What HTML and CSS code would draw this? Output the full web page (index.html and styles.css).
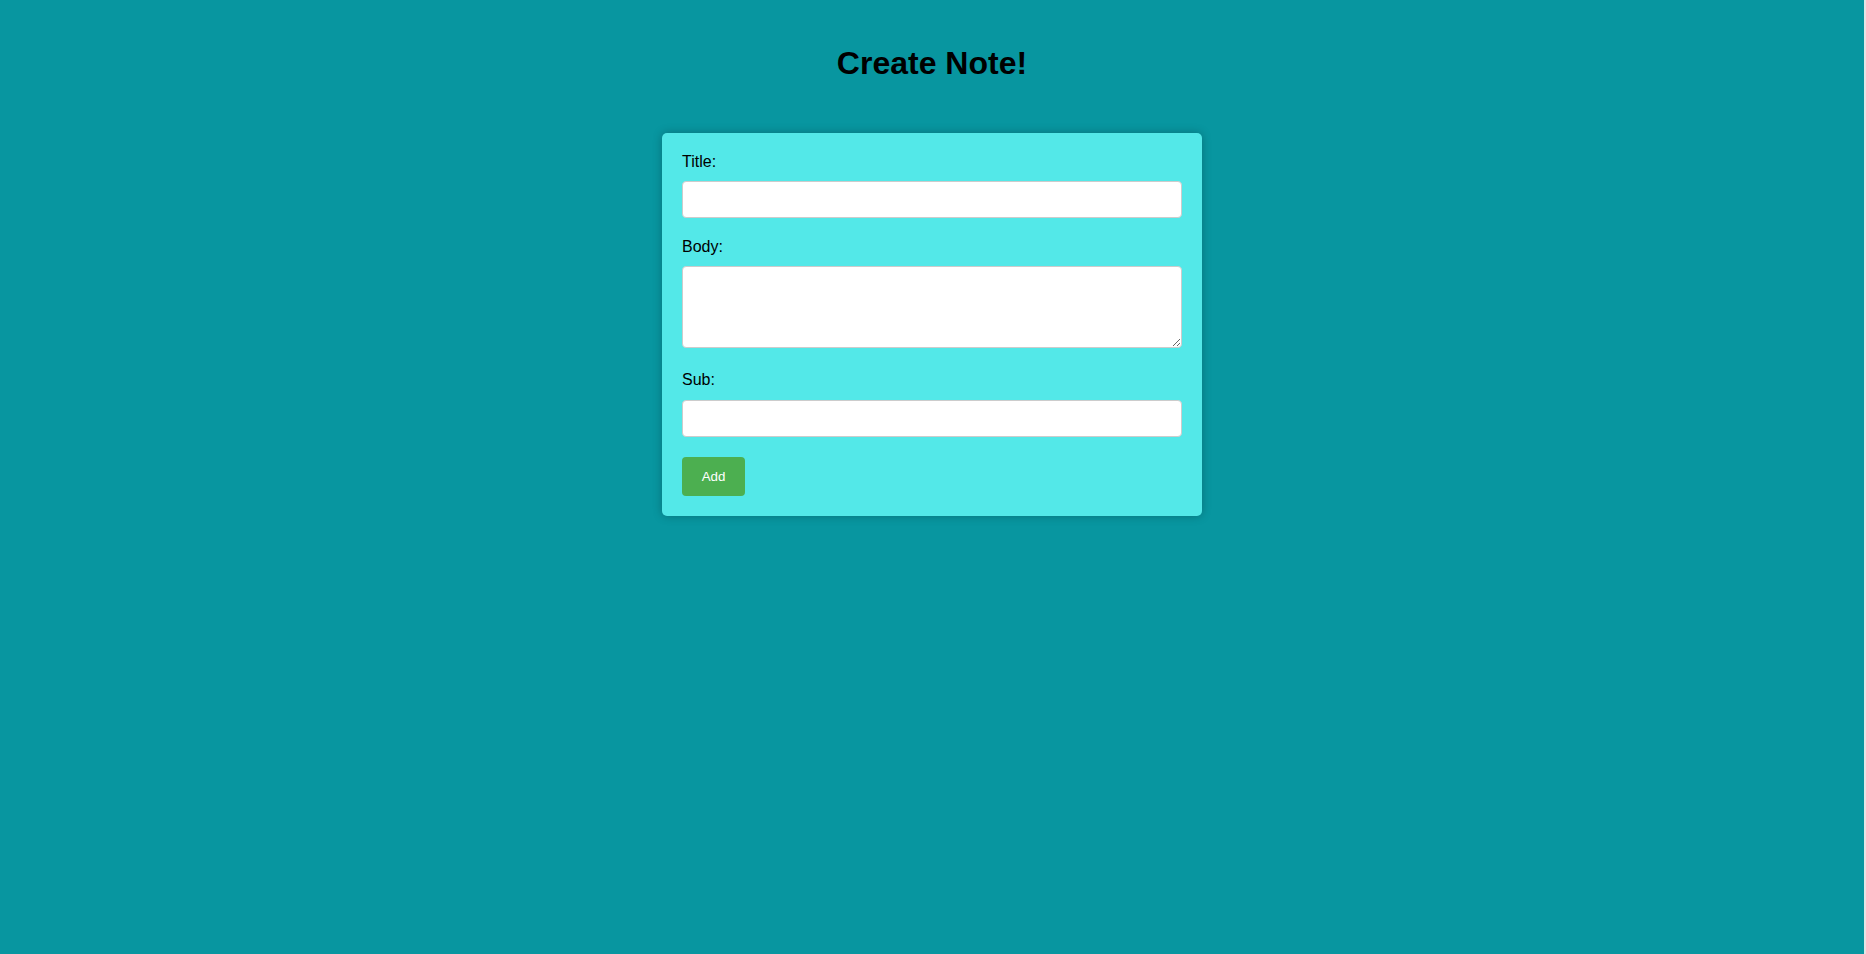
FILE: index.html
```html
<!DOCTYPE html>
<html lang="en">
<head>
<meta charset="utf-8">
<title>Create Note!</title>
<link rel="stylesheet" href="styles.css">
</head>
<body>
<div class="page">
  <h1 class="heading">Create Note!</h1>
  <form class="card">
    <label class="label label-first" for="title">Title:</label>
    <input class="field" id="title" type="text">
    <label class="label label-body" for="body">Body:</label>
    <textarea class="field area" id="body"></textarea>
    <label class="label label-sub" for="sub">Sub:</label>
    <input class="field" id="sub" type="text">
    <div class="actions">
      <button class="btn" type="button">Add</button>
    </div>
  </form>
</div>
</body>
</html>
```
FILE: styles.css
```css
html {
  background: #e4e4e4;
}
body {
  margin: 0 2px 0 0;
  font-family: "Liberation Sans", Arial, sans-serif;
}
.page {
  min-height: 954px;
  background: #0896a0;
  display: flex;
  flex-direction: column;
  align-items: center;
}
.heading {
  margin: 45px 0 51px;
  font-size: 32px;
  line-height: 37px;
  font-weight: bold;
  color: #000;
}
.card {
  width: 500px;
  padding: 20px;
  background: #53e8e8;
  border-radius: 5px;
  box-shadow: 0 0 10px rgba(0, 0, 0, 0.25);
  display: flex;
  flex-direction: column;
}
.label {
  display: block;
  font-size: 16px;
  line-height: 18px;
  color: #000;
  margin: 19px 0 10px;
}
.label-first {
  margin-top: 0;
}
.label-body {
  margin-top: 20px;
  margin-bottom: 10px;
}
.label-sub {
  margin-top: 23px;
  margin-bottom: 11px;
}
.field {
  display: block;
  box-sizing: border-box;
  width: 500px;
  height: 37px;
  margin: 0;
  padding: 8px;
  border: 1px solid #cccccc;
  border-radius: 4px;
  background: #fff;
  font-family: "Liberation Sans", Arial, sans-serif;
  font-size: 14px;
}
.area {
  height: 82px;
  resize: both;
}
.actions {
  margin-top: 20px;
  display: flex;
}
.btn {
  width: 63px;
  height: 39px;
  padding: 0;
  border: none;
  border-radius: 4px;
  background: #4caf50;
  color: #fff;
  font-family: "Liberation Sans", Arial, sans-serif;
  font-size: 13.33px;
}
```
